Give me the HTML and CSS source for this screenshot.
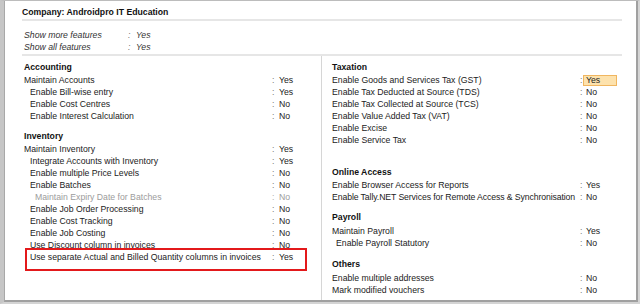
FILE: index.html
```html
<!DOCTYPE html>
<html lang="en">
<head>
    <meta charset="UTF-8">
    <meta name="viewport" content="width=device-width, initial-scale=1.0">
    <title>Company Features</title>
    <link rel="stylesheet" href="styles.css">
</head>
<body>
    <div class="frame">
        <div class="window">
            <div class="panel">
                <div class="title">Company: Androidpro IT Education</div>

                <div class="features">
                    <div class="feature-line"><span>Show more features</span><span class="colon">:</span><span>Yes</span></div>
                    <div class="feature-line"><span>Show all features</span><span class="colon">:</span><span>Yes</span></div>
                </div>

                <div class="columns">
                    <div class="col col-left">
                        <div class="group-title first">Accounting</div>
                        <div class="row"><span>Maintain Accounts</span><span class="colon">:</span><span>Yes</span></div>
                        <div class="row sub"><span>Enable Bill-wise entry</span><span class="colon">:</span><span>Yes</span></div>
                        <div class="row sub"><span>Enable Cost Centres</span><span class="colon">:</span><span>No</span></div>
                        <div class="row sub"><span>Enable Interest Calculation</span><span class="colon">:</span><span>No</span></div>

                        <div class="group-title">Inventory</div>
                        <div class="row"><span>Maintain Inventory</span><span class="colon">:</span><span>Yes</span></div>
                        <div class="row sub"><span>Integrate Accounts with Inventory</span><span class="colon">:</span><span>Yes</span></div>
                        <div class="row sub"><span>Enable multiple Price Levels</span><span class="colon">:</span><span>No</span></div>
                        <div class="row sub"><span>Enable Batches</span><span class="colon">:</span><span>No</span></div>
                        <div class="row sub2 disabled"><span>Maintain Expiry Date for Batches</span><span class="colon">:</span><span>No</span></div>
                        <div class="row sub"><span>Enable Job Order Processing</span><span class="colon">:</span><span>No</span></div>
                        <div class="row sub"><span>Enable Cost Tracking</span><span class="colon">:</span><span>No</span></div>
                        <div class="row sub"><span>Enable Job Costing</span><span class="colon">:</span><span>No</span></div>
                        <div class="row sub"><span>Use Discount column in invoices</span><span class="colon">:</span><span>No</span></div>
                        <div class="row sub marked"><span>Use separate Actual and Billed Quantity columns in invoices</span><span class="colon">:</span><span>Yes</span></div>
                    </div>

                    <div class="col col-right">
                        <div class="group-title first">Taxation</div>
                        <div class="row"><span>Enable Goods and Services Tax (GST)</span><span class="colon">:</span><span class="current">Yes</span></div>
                        <div class="row"><span>Enable Tax Deducted at Source (TDS)</span><span class="colon">:</span><span>No</span></div>
                        <div class="row"><span>Enable Tax Collected at Source (TCS)</span><span class="colon">:</span><span>No</span></div>
                        <div class="row"><span>Enable Value Added Tax (VAT)</span><span class="colon">:</span><span>No</span></div>
                        <div class="row"><span>Enable Excise</span><span class="colon">:</span><span>No</span></div>
                        <div class="row"><span>Enable Service Tax</span><span class="colon">:</span><span>No</span></div>

                        <div class="group-title spaced">Online Access</div>
                        <div class="row"><span>Enable Browser Access for Reports</span><span class="colon">:</span><span>Yes</span></div>
                        <div class="row tight"><span>Enable Tally.NET Services for Remote Access &amp; Synchronisation</span><span class="colon">:</span><span>No</span></div>

                        <div class="group-title loose">Payroll</div>
                        <div class="row"><span>Maintain Payroll</span><span class="colon">:</span><span>Yes</span></div>
                        <div class="row sub-r"><span>Enable Payroll Statutory</span><span class="colon">:</span><span>No</span></div>

                        <div class="group-title loose later">Others</div>
                        <div class="row"><span>Enable multiple addresses</span><span class="colon">:</span><span>No</span></div>
                        <div class="row"><span>Mark modified vouchers</span><span class="colon">:</span><span>No</span></div>
                    </div>
                </div>
            </div>
        </div>
    </div>
</body>
</html>
```

FILE: styles.css
```css
* {
    box-sizing: border-box;
}
body {
    margin: 0;
    background: #fff;
    font-family: "Liberation Sans", Arial, sans-serif;
    font-size: 8.7px;
    line-height: 12px;
    color: #222;
}
.frame {
    height: 304px;
    border-left: 4px solid #c6c6c6;
    border-top: 1px solid #bcbcbc;
    border-right: 2px solid #d4d4d4;
    border-bottom: 2px solid #d4d4d4;
}
.window {
    height: 100%;
    background: #fff;
    border-left: 1px solid #a8a8a8;
    border-right: 2px solid #a0a0a0;
    border-bottom: 2px solid #a0a0a0;
}
.panel {
    margin-left: 17px;
    width: 600px;
    height: 100%;
    display: flex;
    flex-direction: column;
}
.title {
    font-weight: bold;
    color: #111;
    padding-top: 5px;
    padding-bottom: 1px;
    border-bottom: 2px solid #e6e6e6;
}
.features {
    padding: 8px 0 1px 2px;
    border-bottom: 2px solid #e6e6e6;
    font-style: italic;
    color: #333;
}
.feature-line {
    display: grid;
    grid-template-columns: 104px 8px auto;
}
.colon {
    color: #777;
}
.columns {
    flex: 1;
    display: grid;
    grid-template-columns: 299px 1fr;
}
.col {
    padding-top: 5px;
}
.col-left {
    padding-left: 2px;
}
.col-right {
    padding-left: 10px;
    border-left: 1px solid #d6d6d6;
}
.group-title {
    font-weight: bold;
    color: #111;
    margin-top: 8px;
    margin-bottom: 1px;
}
.group-title.first {
    margin-top: 0;
}
.group-title.spaced {
    margin-top: 20px;
}
.group-title.loose {
    margin-bottom: 2px;
}
.group-title.later {
    margin-top: 9px;
}
.row {
    display: grid;
    grid-template-columns: 248px 7px auto;
    white-space: nowrap;
}
.col-right .row {
    grid-template-columns: 248px 6px auto;
}
.row.tight span:first-child {
    letter-spacing: -0.1px;
}
.row.sub span:first-child {
    padding-left: 6px;
}
.row.sub2 span:first-child {
    padding-left: 11px;
}
.row.sub-r span:first-child {
    padding-left: 4px;
}
.row.disabled {
    color: #9c9c9c;
}
.row.disabled .colon {
    color: #b0b0b0;
}
.current {
    justify-self: start;
    width: 34px;
    height: 11px;
    line-height: 9px;
    margin: 1px 0 0 -3px;
    padding-left: 2px;
    background: #fde2ad;
    border: 1px solid #f0b660;
}
.row.marked {
    position: relative;
}
.row.marked::after {
    content: "";
    position: absolute;
    left: 1px;
    top: -3px;
    width: 278px;
    height: 19px;
    border: 2px solid #e3191b;
}
```
